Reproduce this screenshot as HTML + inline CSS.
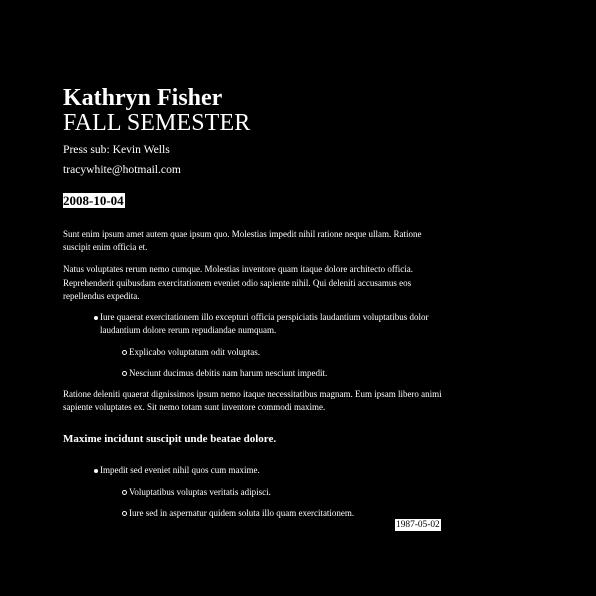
<!DOCTYPE html>
<html><head><style>
body{margin:0;width:596px;height:596px;background:#000;color:#fff;font-family:"Liberation Serif",serif;position:relative;overflow:hidden}
div{position:absolute;white-space:nowrap;font-size:9px;line-height:13px}
.p{left:63px;width:380px;white-space:normal}
.b1{left:100px}
.b2{left:129px}
.d1:before{content:"";position:absolute;left:-6px;top:5px;width:4px;height:4px;border-radius:50%;background:#fff}
.d2:before{content:"";position:absolute;left:-7px;top:4px;width:3px;height:3px;border-radius:50%;border:1px solid #fff}
</style></head><body>
<div style="left:63px;top:84px;font-size:24px;line-height:28px;font-weight:bold">Kathryn Fisher</div>
<div style="left:63px;top:109px;font-size:24px;line-height:28px;letter-spacing:0.1px">FALL SEMESTER</div>
<div style="left:63px;top:142px;font-size:11.6px;line-height:16px">Press sub: Kevin Wells</div>
<div style="left:63px;top:162px;font-size:11.6px;line-height:16px">tracywhite@hotmail.com</div>
<div style="left:63px;top:193px;font-size:13px;line-height:15px;font-weight:bold;background:#fff;color:#000;padding:0 1px 0 0">2008-10-04</div>
<div class="p" style="top:228px">Sunt enim ipsum amet autem quae ipsum quo. Molestias impedit nihil ratione neque ullam. Ratione suscipit enim officia et.</div>
<div class="p" style="top:263px;line-height:13.5px">Natus voluptates rerum nemo cumque. Molestias inventore quam itaque dolore architecto officia. Reprehenderit quibusdam exercitationem eveniet odio sapiente nihil. Qui deleniti accusamus eos repellendus expedita.</div>
<div class="b1 d1" style="top:311px;width:343px;white-space:normal">Iure quaerat exercitationem illo excepturi officia perspiciatis laudantium voluptatibus dolor laudantium dolore rerum repudiandae numquam.</div>
<div class="b2 d2" style="top:346px">Explicabo voluptatum odit voluptas.</div>
<div class="b2 d2" style="top:367px">Nesciunt ducimus debitis nam harum nesciunt impedit.</div>
<div class="p" style="top:388px">Ratione deleniti quaerat dignissimos ipsum nemo itaque necessitatibus magnam. Eum ipsam libero animi sapiente voluptates ex. Sit nemo totam sunt inventore commodi maxime.</div>
<div style="left:63px;top:432px;font-size:11px;line-height:14px;font-weight:bold">Maxime incidunt suscipit unde beatae dolore.</div>
<div class="b1 d1" style="top:464px">Impedit sed eveniet nihil quos cum maxime.</div>
<div class="b2 d2" style="top:486px">Voluptatibus voluptas veritatis adipisci.</div>
<div class="b2 d2" style="top:507px">Iure sed in aspernatur quidem soluta illo quam exercitationem.</div>
<div style="left:395px;top:519px;background:#fff;color:#000;line-height:12px;font-size:9.4px;padding:0 1px">1987-05-02</div>
</body></html>
